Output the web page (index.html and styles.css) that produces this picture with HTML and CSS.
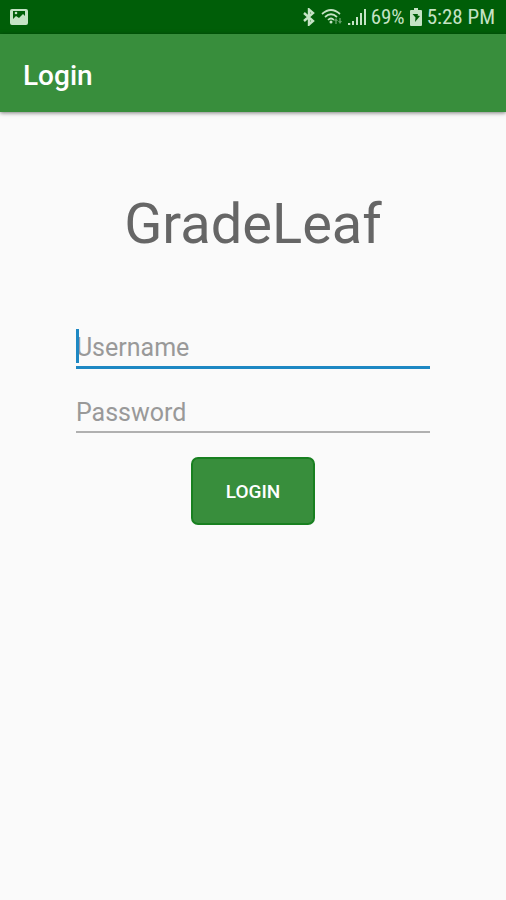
FILE: index.html
```
<!DOCTYPE html>
<html lang="en">
<head>
    <meta charset="UTF-8">
    <meta name="viewport" content="width=device-width, initial-scale=1.0">
    <title>Login - GradeLeaf</title>
    <link rel="stylesheet" href="styles.css">
</head>
<body>
    <div class="status-bar">
        <svg width="18" height="16" viewBox="0 0 18 16">
            <path fill="currentColor" fill-rule="evenodd" d="M2 0h14a2 2 0 0 1 2 2v12a2 2 0 0 1-2 2H2a2 2 0 0 1-2-2V2a2 2 0 0 1 2-2zM3 2v8l3-3 3 2 4-4 2 2V2z"/>
            <circle cx="6" cy="4" r="1.3" fill="currentColor"/>
        </svg>
        <div class="status-right">
            <svg width="14" height="18" viewBox="0 0 14 18" fill="none" stroke="currentColor" stroke-width="2.4">
                <path d="M2 5l9 8-4 3.500V1.500L11 5l-9 8"/>
            </svg>
            <svg width="22" height="18" viewBox="0 0 22 18" fill="none" stroke="currentColor" stroke-width="1.700">
                <path d="M1 6q9-8 18 0M4 9q6-5.500 12 0M7 12q3-3 6 0"/>
                <circle cx="10" cy="14" r="1.500" fill="currentColor" stroke="none"/>
                <path fill="currentColor" stroke="none" opacity="0.5" d="M13 13l2-3 2 3h-1.300v3h-1.400v-3zM17 13h1.300v-3h1.400v3H21l-2 3z"/>
            </svg>
            <svg width="18" height="18" viewBox="0 0 18 18" fill="currentColor">
                <path d="M0 15h2.300v2H0zM4 13h2v4H4zM8 9h2v8H8zM12 5h2v12h-2zM16 1h2v16h-2z"/>
            </svg>
            <span class="battery-level">69%</span>
            <svg width="12" height="18" viewBox="0 0 12 18">
                <path fill="currentColor" fill-rule="evenodd" d="M4 0h4v2h3a1 1 0 0 1 1 1v14a1 1 0 0 1-1 1H1a1 1 0 0 1-1-1V3a1 1 0 0 1 1-1h3zM2.500 6l3 3.500L5 14l5-6-2.500-.5L8 6z"/>
            </svg>
            <span class="clock">5:28 PM</span>
        </div>
    </div>

    <header class="app-bar">
        <h1>Login</h1>
    </header>

    <main class="login">
        <h2 class="brand">GradeLeaf</h2>
        <form class="login-form">
            <div class="field field-active">
                <input type="text" id="username" placeholder="Username" aria-label="Username">
                <span class="caret"></span>
            </div>
            <div class="field">
                <input type="password" id="password" placeholder="Password" aria-label="Password">
            </div>
            <button type="button" class="login-button">LOGIN</button>
        </form>
    </main>
</body>
</html>
```
FILE: styles.css
```
body {
    margin: 0;
    font-family: Roboto, sans-serif;
    background-color: #fafafa;
    color: #666666;
}

.status-bar {
    display: flex;
    align-items: center;
    justify-content: space-between;
    height: 34px;
    padding: 0 11px 0 10px;
    background-color: #005e08;
    color: #c5e3c5;
    font-family: "Roboto Condensed", Roboto, sans-serif;
    font-size: 21px;
}

.status-right {
    display: flex;
    align-items: center;
    gap: 5px;
}

.app-bar {
    display: flex;
    align-items: center;
    height: 78px;
    padding: 0 23px;
    background-color: #388e3c;
    box-shadow: 0 1px 4px rgba(0, 0, 0, 0.5);
}

.app-bar h1 {
    margin: 4px 0 0;
    color: #ffffff;
    font-size: 28px;
    font-weight: 500;
}

.login {
    padding: 78px 15%;
}

.brand {
    margin: 0;
    font-size: 56px;
    font-weight: 400;
    line-height: 68px;
    text-align: center;
}

.login-form {
    display: flex;
    flex-direction: column;
    align-items: center;
    margin-top: 71px;
}

.field {
    position: relative;
    box-sizing: border-box;
    width: 100%;
    height: 64px;
    padding-bottom: 24px;
}

.field input {
    box-sizing: border-box;
    width: 100%;
    height: 40px;
    padding: 0;
    border: none;
    border-bottom: 2px solid #b0b0b0;
    border-radius: 0;
    outline: none;
    background: none;
    color: #333333;
    font-family: inherit;
    font-size: 25px;
}

.field input::placeholder {
    color: #999999;
    opacity: 1;
}

.field-active input {
    border-bottom: 3px solid #1e88c3;
}

.caret {
    position: absolute;
    top: 0;
    left: 0;
    width: 3px;
    height: 34px;
    background-color: #1e88c3;
}

.login-button {
    width: 124px;
    height: 68px;
    border: 2px solid #188020;
    border-radius: 7px;
    background-color: #388e3c;
    color: #ffffff;
    font-family: inherit;
    font-size: 19px;
    font-weight: 500;
    cursor: pointer;
}
```
